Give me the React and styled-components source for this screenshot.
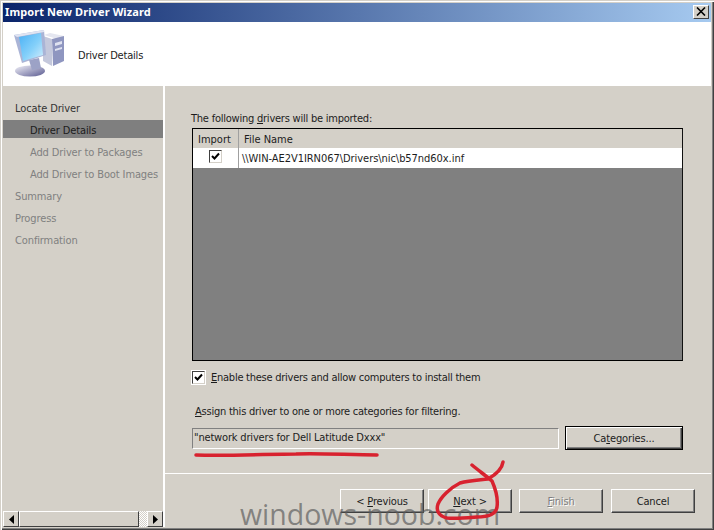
import React from 'react'
import styled, { createGlobalStyle } from 'styled-components'

const GlobalStyle = createGlobalStyle`
    html, body {
        margin: 0;
        padding: 0;
        background: #d4d0c8;
    }
    body {
        font-family: "DejaVu Sans", "Noto Sans", sans-serif;
        font-stretch: condensed;
        font-size: 11px;
        color: #1c1c1c;
    }
`

const Window = styled.div`
    position: relative;
    box-sizing: border-box;
    width: 714px;
    height: 530px;
    overflow: hidden;
    display: flex;
    flex-direction: column;
    padding: 3px 3px 3px 3px;
    background: #d4d0c8;
    box-shadow: inset 1px 1px 0 #d4d0c8, inset 2px 2px 0 #fff, inset -1px -1px 0 #404040, inset -2px -2px 0 #808080;
`

const TitleBar = styled.div`
    height: 19px;
    flex: none;
    box-sizing: border-box;
    display: flex;
    align-items: center;
    justify-content: space-between;
    padding: 0 2px 2px 2px;
    background: linear-gradient(to right, #0a246a, #a6caf0);
`

const Title = styled.span`
    color: #fff;
    font-family: "Noto Sans", sans-serif;
    font-stretch: normal;
    font-weight: 700;
    font-size: 11px;
    letter-spacing: 0.1px;
`

const CloseButton = styled.button`
    box-sizing: border-box;
    width: 16px;
    height: 14px;
    padding: 0;
    display: flex;
    align-items: center;
    justify-content: center;
    background: #d4d0c8;
    border: 1px solid;
    border-color: #fff #404040 #404040 #fff;
`

const Header = styled.div`
    height: 64px;
    flex: none;
    display: flex;
    align-items: center;
    gap: 11px;
    padding-left: 9px;
    background: #fff;
`

const HeaderText = styled.span`
    font-size: 11px;
    letter-spacing: -0.2px;
    padding-top: 2px;
`

const Body = styled.div`
    flex: 1;
    display: flex;
    min-height: 0;
`

const Sidebar = styled.nav`
    width: 160px;
    flex: none;
    display: flex;
    flex-direction: column;
    padding-top: 12px;
    border-right: 2px solid #fff;
`

const Step = styled.div`
    height: 18px;
    line-height: 21px;
    margin-bottom: 4px;
    padding-left: ${p => (p.$sub ? 27 : 12)}px;
    white-space: nowrap;
    letter-spacing: -0.12px;
    color: ${p => (p.$active ? '#1c1c1c' : p.$muted ? '#808080' : '#333')};
    background: ${p => (p.$active ? '#7f7f7f' : 'transparent')};
`

const ScrollBar = styled.div`
    margin-top: auto;
    height: 16px;
    display: flex;
    background: repeating-conic-gradient(#fff 0 25%, #d4d0c8 0 50%) 0 0 / 2px 2px;
`

const ScrollButton = styled.div`
    box-sizing: border-box;
    width: 16px;
    flex: none;
    display: flex;
    align-items: center;
    justify-content: center;
    background: #d4d0c8;
    border: 1px solid;
    border-color: #fff #404040 #404040 #fff;
`

const ScrollThumb = styled(ScrollButton)`
    width: 120px;
`

const ScrollGap = styled.div`
    flex: 1;
`

const Main = styled.main`
    flex: 1;
    display: flex;
    flex-direction: column;
    min-width: 0;
`

const Content = styled.div`
    flex: 1;
    padding: 25px 28px 0 26px;
`

const Label = styled.div`
    height: 14px;
    line-height: 16px;
    white-space: nowrap;
    letter-spacing: -0.23px;
    margin-top: ${p => p.$top || 0}px;
    padding-left: ${p => p.$indent || 0}px;
`

const DriverList = styled.div`
    box-sizing: border-box;
    height: 233px;
    margin: 3px 0 0 1px;
    display: flex;
    flex-direction: column;
    background: #808080;
    border: 1px solid #000;
    border-right-color: #111;
`

const ListHead = styled.div`
    height: 19px;
    display: flex;
    background: #d4d0c8;
`

const HeadCell = styled.div`
    box-sizing: border-box;
    width: ${p => (p.$width ? `${p.$width}px` : 'auto')};
    flex: ${p => (p.$width ? 'none' : 1)};
    padding-left: 5px;
    line-height: 22px;
    border-right: ${p => (p.$width ? '1px solid #a0a0a0' : 'none')};
`

const ListRow = styled.div`
    height: 20px;
    display: flex;
    background: #fff;
`

const ImportCell = styled.div`
    box-sizing: border-box;
    width: 46px;
    display: flex;
    align-items: center;
    justify-content: center;
    padding-bottom: 3px;
    border-right: 1px solid #a0a0a0;
`

const FileCell = styled.div`
    flex: 1;
    padding-left: 3px;
    line-height: 22px;
    letter-spacing: -0.05px;
`

const CheckBox = styled.span`
    box-sizing: border-box;
    width: 13px;
    height: 13px;
    flex: none;
    display: flex;
    align-items: center;
    justify-content: center;
    background: #fff;
    border: 1px solid;
    border-color: #404040 #d4d0c8 #d4d0c8 #404040;
    box-shadow: 0 0 0 ${p => (p.$ring ? 1 : 0)}px #fff;
`

const CheckRow = styled.div`
    display: flex;
    align-items: center;
    gap: 6px;
    margin: 9px 0 0 1px;
    height: 14px;
    white-space: nowrap;
    letter-spacing: -0.25px;
`

const FieldRow = styled.div`
    display: flex;
    align-items: center;
    gap: 6px;
    margin: 8px 0 0 1px;
`

const Field = styled.div`
    box-sizing: border-box;
    flex: 1;
    height: 21px;
    line-height: 18px;
    padding-left: 1px;
    white-space: nowrap;
    letter-spacing: -0.17px;
    border: 1px solid;
    border-color: #808080 #fff #fff #808080;
`

const Button = styled.button`
    box-sizing: border-box;
    width: ${p => p.$width || 84}px;
    height: 24px;
    padding: 1px 0 0;
    margin-left: ${p => p.$gap || 0}px;
    font: inherit;
    letter-spacing: -0.15px;
    color: ${p => (p.disabled ? '#808080' : '#1c1c1c')};
    text-shadow: ${p => (p.disabled ? '1px 1px 0 #fff' : 'none')};
    background: #d4d0c8;
    border: 1px solid;
    border-color: #fff #404040 #404040 #fff;
    box-shadow: inset -1px -1px 0 #808080;
`

const DefaultButton = styled(Button)`
    border: 1px solid #000;
    box-shadow: inset 1px 1px 0 #fff, inset -1px -1px 0 #404040, inset -2px -2px 0 #808080;
`

const Footer = styled.footer`
    height: 54px;
    flex: none;
    box-sizing: border-box;
    display: flex;
    justify-content: flex-end;
    align-items: flex-start;
    padding: 15px 16px 0 0;
    border-top: 1px solid #fff;
`

const Scribble = styled.svg`
    position: absolute;
    left: 0;
    top: 0;
    pointer-events: none;
`

const Watermark = styled.div`
    position: absolute;
    left: 240px;
    top: 494px;
    font-family: "Open Sans", sans-serif;
    font-stretch: normal;
    font-size: 28.5px;
    line-height: 40px;
    white-space: nowrap;
    color: rgba(90, 90, 90, 0.68);
`

const Check = () => (
    <svg width="9" height="9" viewBox="0 0 9 9">
        <path d="M1 4l2.5 2.5L8 1.5" fill="none" stroke="#000" strokeWidth="2" />
    </svg>
)

const Arrow = ({ right }) => (
    <svg width="5" height="9" viewBox="0 0 5 9">
        <path d={right ? 'M0 0l5 4.5L0 9z' : 'M5 0L0 4.5 5 9z'} fill="#000" />
    </svg>
)

const ComputerIcon = () => (
    <svg width="55" height="52" viewBox="10 30 55 52">
        <defs>
            <linearGradient id="screen" x1="0" y1="0" x2="1" y2="1">
                <stop offset="0" stopColor="#4ab0f4" />
                <stop offset="0.55" stopColor="#84d0fa" />
                <stop offset="1" stopColor="#d4eefc" />
            </linearGradient>
            <linearGradient id="base" x1="0" y1="0" x2="1" y2="1">
                <stop offset="0" stopColor="#f0f0f8" />
                <stop offset="1" stopColor="#5a5a90" />
            </linearGradient>
        </defs>
        <path d="M42 37l6-2 14 3-7 3z" fill="#e4e6f0" />
        <path d="M50 41l12-3v25l-11 5z" fill="#8f96c0" />
        <path d="M41 38l9 3v27l-9-5z" fill="#c4c8dc" />
        <path d="M53 45l7-2v3l-7 2zM53 51l7-2v2l-7 2z" fill="#dfe2f0" />
        <ellipse cx="28" cy="73" rx="15" ry="5.5" fill="url(#base)" />
        <path d="M27 62l10-2 2 10-9 2z" fill="#9ca2c6" />
        <path d="M12 37l30-5 2 25-24 8z" fill="#aab4d6" />
        <path d="M12 37l30-5 0 2-27 5z" fill="#dfe4f2" />
        <path d="M17 39l22-4 2 22-20 6z" fill="url(#screen)" />
    </svg>
)

const App = () => {
    return (
        <Window>
            <GlobalStyle />
            <TitleBar>
                <Title>Import New Driver Wizard</Title>
                <CloseButton aria-label="Close">
                    <svg width="10" height="9" viewBox="0 0 10 9">
                        <path d="M1 0.5l8 8M9 0.5l-8 8" stroke="#000" strokeWidth="1.6" />
                    </svg>
                </CloseButton>
            </TitleBar>
            <Header>
                <ComputerIcon />
                <HeaderText>Driver Details</HeaderText>
            </Header>
            <Body>
                <Sidebar>
                    <Step>Locate Driver</Step>
                    <Step $sub $active>Driver Details</Step>
                    <Step $sub $muted>Add Driver to Packages</Step>
                    <Step $sub $muted>Add Driver to Boot Images</Step>
                    <Step $muted>Summary</Step>
                    <Step $muted>Progress</Step>
                    <Step $muted>Confirmation</Step>
                    <ScrollBar>
                        <ScrollButton><Arrow /></ScrollButton>
                        <ScrollThumb />
                        <ScrollGap />
                        <ScrollButton><Arrow right /></ScrollButton>
                    </ScrollBar>
                </Sidebar>
                <Main>
                    <Content>
                        <Label>The following <u>d</u>rivers will be imported:</Label>
                        <DriverList>
                            <ListHead>
                                <HeadCell $width={46}>Import</HeadCell>
                                <HeadCell>File Name</HeadCell>
                            </ListHead>
                            <ListRow>
                                <ImportCell>
                                    <CheckBox><Check /></CheckBox>
                                </ImportCell>
                                <FileCell>\\WIN-AE2V1IRN067\Drivers\nic\b57nd60x.inf</FileCell>
                            </ListRow>
                        </DriverList>
                        <CheckRow>
                            <CheckBox $ring><Check /></CheckBox>
                            <span><u>E</u>nable these drivers and allow computers to install them</span>
                        </CheckRow>
                        <Label $top={20} $indent={4}><u>A</u>ssign this driver to one or more categories for filtering.</Label>
                        <FieldRow>
                            <Field>"network drivers for Dell Latitude Dxxx"</Field>
                            <DefaultButton $width={118}>Ca<u>t</u>egories...</DefaultButton>
                        </FieldRow>
                    </Content>
                    <Footer>
                        <Button>&lt; <u>P</u>revious</Button>
                        <Button $gap={4}><u>N</u>ext &gt;</Button>
                        <Button $gap={7} disabled><u>F</u>inish</Button>
                        <Button $gap={8}>Cancel</Button>
                    </Footer>
                </Main>
            </Body>
            <Watermark>windows-noob.com</Watermark>
            <Scribble width="714" height="530" viewBox="0 0 714 530">
                <path d="M196 455C230 456 270 454 296 454C320 453 350 455 377 455" fill="none" stroke="#d8222f" strokeWidth="3.5" strokeLinecap="round" />
                <path d="M472 465C478 470 486 476 492 481C496 490 498 500 497 507C496 514 490 517 477 517C465 518 455 519 447 518C438 516 436 510 438 504C441 497 450 488 460 483C470 480 480 480 488 479C495 475 502 470 503 462" fill="none" stroke="#d8222f" strokeWidth="3.5" strokeLinecap="round" strokeLinejoin="round" />
            </Scribble>
        </Window>
    )
}

export default App
